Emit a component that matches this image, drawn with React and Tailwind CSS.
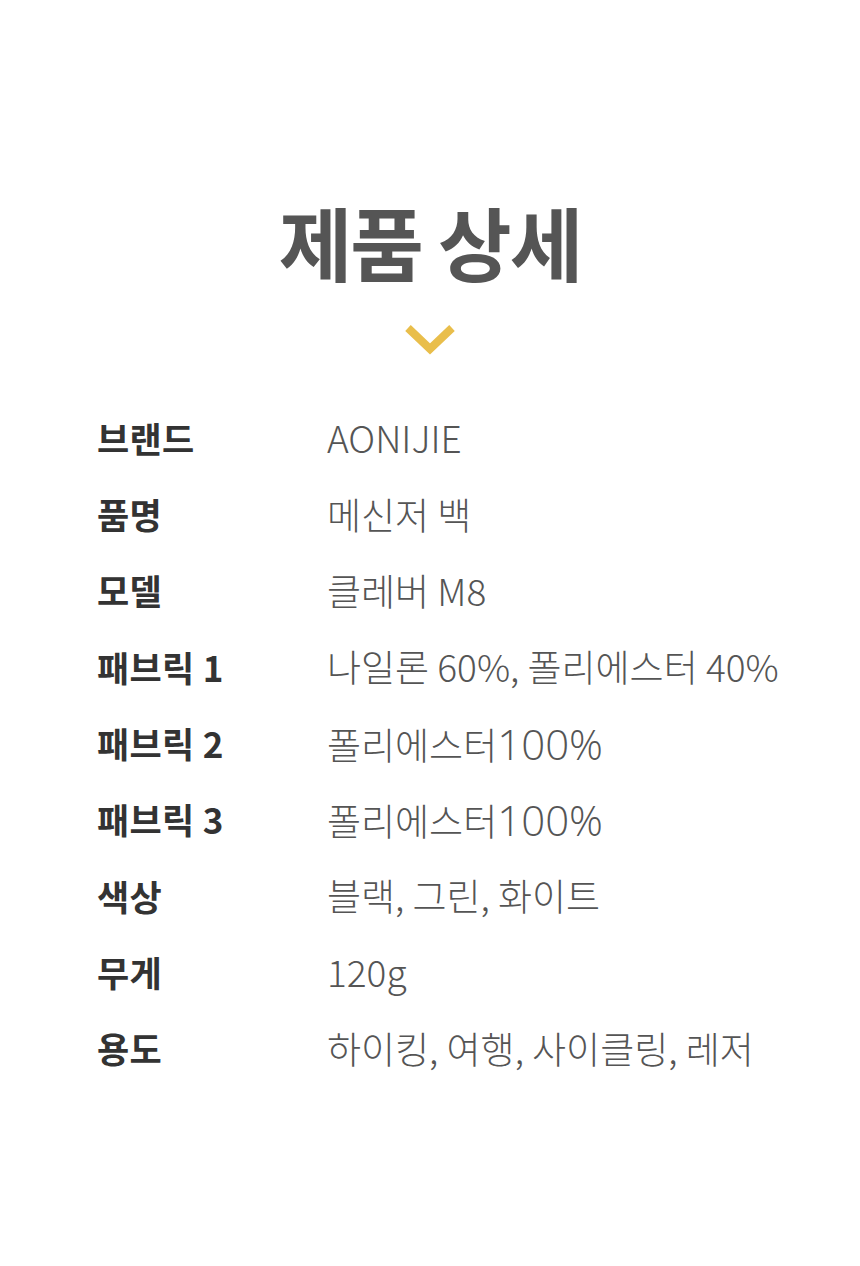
export default function App() {
  const rows = [
    ["브랜드", "AONIJIE"],
    ["품명", "메신저 백"],
    ["모델", "클레버 M8"],
    ["패브릭 1", "나일론 60%, 폴리에스터 40%"],
    ["패브릭 2", "폴리에스터", "100%"],
    ["패브릭 3", "폴리에스터", "100%"],
    ["색상", "블랙, 그린, 화이트"],
    ["무게", "120g"],
    ["용도", "하이킹, 여행, 사이클링, 레저"],
  ];
  return (
    <div
      className="w-[860px] h-[1266px] bg-white flex flex-col items-center"
      style={{ fontFamily: '"Noto Sans CJK KR", "Noto Sans", sans-serif' }}
    >
      <h1 className="mt-[190px] text-[80px] leading-[100px] font-bold text-[#555555] tracking-[-2px]">
        제품 상세
      </h1>
      <svg className="mt-[32px]" width="52" height="34" viewBox="0 0 52 34">
        <polyline
          points="4,6 26,27 48,6"
          fill="none"
          stroke="#E9BE4B"
          strokeWidth="8"
        />
      </svg>
      <div className="self-stretch mt-[44px] pl-[97px] flex flex-col">
        {rows.map(([k, v, extra]) => (
          <div key={k} className="flex items-center h-[76.3px]">
            <div className="w-[230px] text-[35px] font-bold text-[#333333] tracking-[0.3px]">
              {k}
            </div>
            <div className="text-[37px] font-light text-[#555555] tracking-[0px] flex items-baseline">
              <span>{v}</span>
              {extra && (
                <span
                  className="text-[42px] font-light tracking-[0px]"
                  style={{ fontFamily: '"Open Sans", sans-serif' }}
                >
                  {extra}
                </span>
              )}
            </div>
          </div>
        ))}
      </div>
    </div>
  );
}
